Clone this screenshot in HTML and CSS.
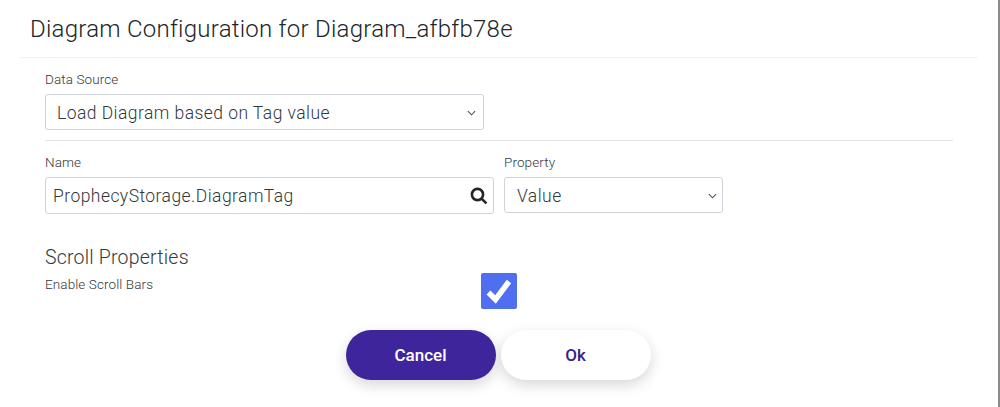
FILE: index.html
```html
<!DOCTYPE html>
<html lang="en">
<head>
    <meta charset="UTF-8">
    <meta name="viewport" content="width=device-width, initial-scale=1.0">
    <title>Diagram Configuration</title>
    <link rel="stylesheet" href="styles.css">
</head>
<body>
    <div class="dialog">
        <h1 class="dialog-title">Diagram Configuration for Diagram_afbfb78e</h1>
        <div class="dialog-body">
            <div class="field">
                <label class="field-label">Data Source</label>
                <div class="control source-select">
                    <span>Load Diagram based on Tag value</span>
                    <svg class="chevron" viewBox="0 0 10 6"><path d="M1 1l4 4 4-4" /></svg>
                </div>
            </div>
            <hr class="divider">
            <div class="tag-row">
                <div class="field">
                    <label class="field-label">Name</label>
                    <div class="control name-input">
                        <span>ProphecyStorage.DiagramTag</span>
                        <svg class="search-icon" viewBox="0 0 18 18"><circle cx="7.5" cy="7.5" r="5.6" /><path d="M11.8 11.8l4.6 4.6" /></svg>
                    </div>
                </div>
                <div class="field">
                    <label class="field-label">Property</label>
                    <div class="control property-select">
                        <span>Value</span>
                        <svg class="chevron" viewBox="0 0 10 6"><path d="M1 1l4 4 4-4" /></svg>
                    </div>
                </div>
            </div>
            <h2 class="section-title">Scroll Properties</h2>
            <div class="scroll-row">
                <label class="field-label">Enable Scroll Bars</label>
                <div class="checkbox">
                    <svg viewBox="0 0 36 36"><path d="M7.5 19.5l7 7L28 8.5" /></svg>
                </div>
            </div>
            <div class="actions">
                <button class="btn btn-cancel">Cancel</button>
                <button class="btn btn-ok">Ok</button>
            </div>
        </div>
    </div>
</body>
</html>
```

FILE: styles.css
```css
html, body {
    margin: 0;
    height: 407px;
    overflow: hidden;
}
body {
    background: #fff;
    font-family: 'Roboto', 'Liberation Sans', sans-serif;
    color: #495057;
    border-right: 2px solid #8a8a8a;
    box-sizing: border-box;
}
.dialog {
    padding: 0 20px;
    width: 958px;
}
.dialog-title {
    margin: 0;
    padding: 15px 0 13px 10px;
    height: 29px;
    line-height: 29px;
    font-size: 24px;
    font-weight: 300;
    letter-spacing: 0.25px;
    color: #212529;
    border-bottom: 1px solid #f1f1f1;
}
.dialog-body {
    padding: 13px 25px 0;
}
.field-label {
    display: block;
    font-size: 13.5px;
    line-height: 16px;
    font-weight: 300;
    letter-spacing: 0.1px;
    color: #33373b;
}
.control {
    display: flex;
    align-items: center;
    justify-content: space-between;
    box-sizing: border-box;
    margin-top: 7px;
    height: 36px;
    border: 1px solid #ced4da;
    border-radius: 3px;
    background: #fff;
    font-size: 17.5px;
    font-weight: 300;
    letter-spacing: 0.45px;
    color: #33373b;
}
.source-select {
    width: 439px;
    padding: 1px 7px 0 11px;
}
.divider {
    margin: 10px 0 13px;
    border: 0;
    border-top: 1px solid #e3e3e3;
    width: 908px;
}
.tag-row {
    display: flex;
    gap: 10px;
}
.name-input {
    width: 449px;
    height: 37px;
    padding: 0 5px 0 7px;
}
.property-select {
    width: 219px;
    padding: 1px 5px 0 12px;
}
.chevron {
    width: 9px;
    height: 6px;
    fill: none;
    stroke: #495057;
    stroke-width: 1.2;
}
.search-icon {
    width: 18px;
    height: 18px;
    fill: none;
    stroke: #212529;
    stroke-width: 2.6;
}
.section-title {
    margin: 32px 0 0;
    font-size: 19.5px;
    line-height: 24px;
    font-weight: 300;
    letter-spacing: 0.2px;
    color: #33373b;
}
.scroll-row {
    display: flex;
    justify-content: space-between;
    width: 472px;
    height: 36px;
    padding-top: 3px;
}
.scroll-row .field-label {
    margin-top: 3px;
}
.checkbox {
    width: 36px;
    height: 36px;
    border-radius: 2px;
    background: #4f6ff0;
}
.checkbox svg {
    display: block;
    fill: none;
    stroke: #fff;
    stroke-width: 5.5;
}
.actions {
    display: flex;
    justify-content: center;
    gap: 5px;
    margin-top: 21px;
    width: 906px;
}
.btn {
    width: 150px;
    height: 50px;
    border: 0;
    border-radius: 25px;
    font-family: inherit;
    font-size: 17px;
    font-weight: 500;
    box-shadow: 0 5px 14px rgba(0, 0, 0, 0.16);
}
.btn-cancel {
    background: #3f259b;
    color: #fff;
}
.btn-ok {
    background: #fff;
    color: #38218f;
}
```
